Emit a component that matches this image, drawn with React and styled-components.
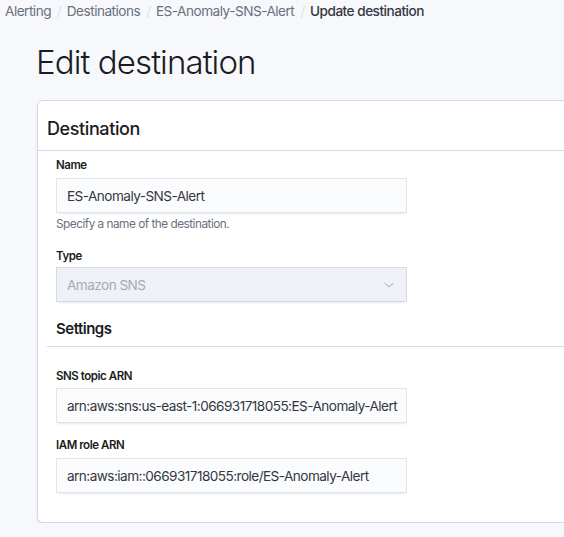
import React from 'react';
import styled, { createGlobalStyle } from 'styled-components';

const GlobalStyle = createGlobalStyle`
  body {
    margin: 0;
    background: #f7f8fc;
    font-family: Inter, "Noto Sans", sans-serif;
    overflow: hidden;
  }
`;

const Page = styled.div`
  padding-top: 1px;
  width: 700px;
`;

const Breadcrumbs = styled.nav`
  display: flex;
  align-items: center;
  padding-left: 5px;
  font-size: 13.6px;
  line-height: 20px;
  letter-spacing: -0.5px;
  color: #69707d;
`;

const Crumb = styled.span`
  color: ${(p) => (p.last ? '#343741' : '#69707d')};
  font-weight: ${(p) => (p.last ? 500 : 400)};
`;

const Slash = styled.span`
  color: #d3dae6;
  margin: 0 5px 0 6px;
  font-weight: 300;
  letter-spacing: 0;
`;

const Content = styled.div`
  padding-left: 37px;
`;

const Title = styled.h1`
  margin: 21px 0 18px -1px;
  font-size: 33px;
  line-height: 40px;
  font-weight: 300;
  color: #1a1c21;
  letter-spacing: -0.9px;
`;

const Panel = styled.section`
  width: 620px;
  background: #fff;
  border: 1px solid #d3dae6;
  border-radius: 6px;
  box-shadow: 0 2px 2px -1px rgba(152, 162, 179, 0.3), 0 1px 5px -2px rgba(152, 162, 179, 0.3);
`;

const PanelHeader = styled.div`
  padding: 17px 9px 10px;
  border-bottom: 1px solid #d3dae6;
`;

const PanelTitle = styled.h2`
  margin: 0;
  font-size: 18px;
  line-height: 22px;
  font-weight: 500;
  letter-spacing: -0.4px;
  color: #1a1c21;
`;

const PanelBody = styled.div`
  padding: 6px 0 29px 9px;
`;

const Fields = styled.div`
  padding-left: 9px;
`;

const Field = styled.div`
  margin-top: ${(p) => p.gap || 0}px;
`;

const Label = styled.label`
  display: block;
  font-size: 11.5px;
  line-height: 16px;
  font-weight: 600;
  letter-spacing: -0.45px;
  color: #1a1c21;
  margin-bottom: ${(p) => p.mb || 5}px;
`;

const Input = styled.div`
  box-sizing: border-box;
  width: 351px;
  height: 35px;
  padding: 0 11px;
  display: flex;
  align-items: center;
  justify-content: space-between;
  font-size: 13.6px;
  letter-spacing: -0.55px;
  color: ${(p) => (p.disabled ? '#a2abba' : '#343741')};
  background: ${(p) => (p.disabled ? '#eef2f7' : '#fbfcfd')};
  box-shadow: 0 1px 1px -1px rgba(152, 162, 179, 0.2), 0 3px 2px -2px rgba(152, 162, 179, 0.2),
    inset 0 0 0 1px rgba(16, 22, 26, 0.1);
  white-space: nowrap;
  overflow: hidden;
`;

const Help = styled.div`
  margin-top: 3px;
  font-size: 11.8px;
  line-height: 16px;
  letter-spacing: -0.5px;
  color: #69707d;
`;

const SectionHead = styled.div`
  margin-top: 17px;
  padding: 0 0 7px 9px;
  border-bottom: 1px solid #d3dae6;
`;

const SectionTitle = styled.h3`
  margin: 0;
  font-size: 15px;
  line-height: 20px;
  font-weight: 600;
  letter-spacing: -0.5px;
  color: #1a1c21;
`;

const Chevron = () => (
  <svg width="12" height="12" viewBox="0 0 16 16" style={{ marginRight: 1 }}>
    <path d="M2 5.5l6 5 6-5" fill="none" stroke="#98a2b3" strokeWidth="1.2" />
  </svg>
);

export default function App() {
  return (
    <Page>
      <GlobalStyle />
      <Breadcrumbs>
        <Crumb>Alerting</Crumb>
        <Slash>/</Slash>
        <Crumb>Destinations</Crumb>
        <Slash>/</Slash>
        <Crumb>ES-Anomaly-SNS-Alert</Crumb>
        <Slash>/</Slash>
        <Crumb last>Update destination</Crumb>
      </Breadcrumbs>
      <Content>
        <Title>Edit destination</Title>
        <Panel>
          <PanelHeader>
            <PanelTitle>Destination</PanelTitle>
          </PanelHeader>
          <PanelBody>
            <Fields>
              <Field>
                <Label>Name</Label>
                <Input>ES-Anomaly-SNS-Alert</Input>
                <Help>Specify a name of the destination.</Help>
              </Field>
              <Field gap={16}>
                <Label mb={3}>Type</Label>
                <Input disabled>
                  Amazon SNS
                  <Chevron />
                </Input>
              </Field>
            </Fields>
            <SectionHead>
              <SectionTitle>Settings</SectionTitle>
            </SectionHead>
            <Fields>
              <Field gap={21}>
                <Label mb={4}>SNS topic ARN</Label>
                <Input>arn:aws:sns:us-east-1:066931718055:ES-Anomaly-Alert</Input>
              </Field>
              <Field gap={14}>
                <Label>IAM role ARN</Label>
                <Input>arn:aws:iam::066931718055:role/ES-Anomaly-Alert</Input>
              </Field>
            </Fields>
          </PanelBody>
        </Panel>
      </Content>
    </Page>
  );
}
